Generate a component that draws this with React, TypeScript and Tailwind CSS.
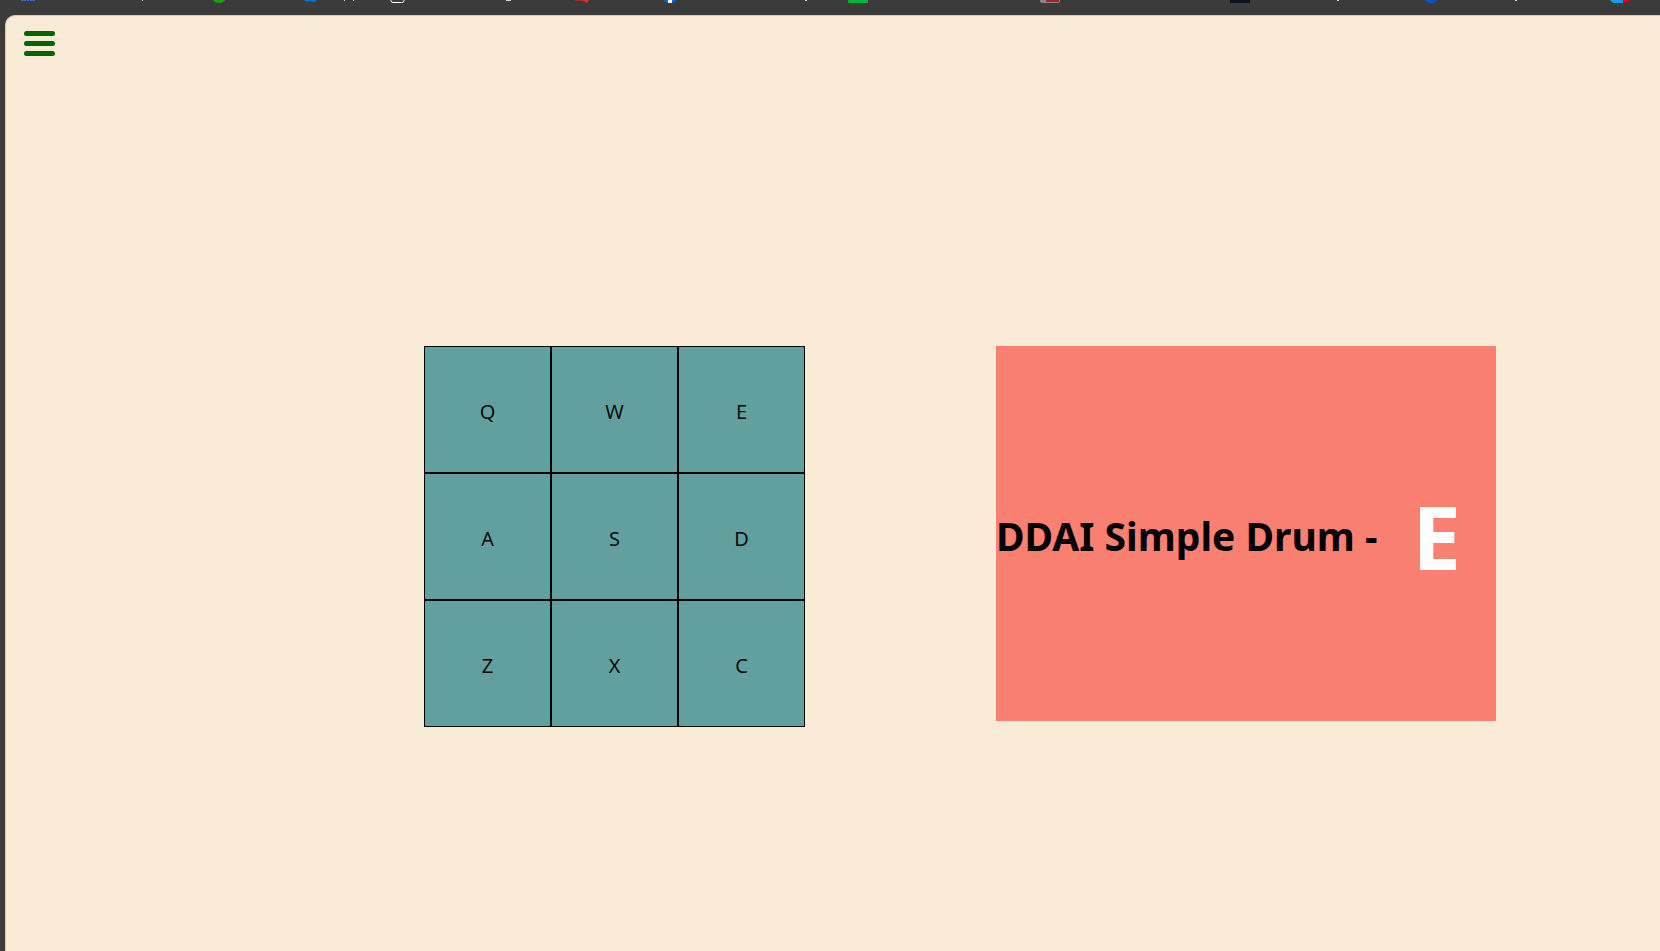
import React, { useState } from "react";

const rows = [
  ["Q", "W", "E"],
  ["A", "S", "D"],
  ["Z", "X", "C"],
];

function Tick({ className }: { className: string }) {
  return <span className={"h-px shrink-0 bg-[#d8d8d8] " + className} />;
}

function BookmarkStrip() {
  return (
    <header aria-hidden="true" className="flex h-[15px] shrink-0 items-start overflow-hidden bg-[#3b3b3b]">
      <svg className="ml-[21px] shrink-0" width="14" height="4">
        <path d="M0 0h5v1h-5zM6 0h2v1h-2zM9 0h5v1h-5z" fill="#3b6fc4" />
      </svg>
      <Tick className="ml-[107px] w-px" />
      <svg className="ml-[69px] shrink-0" width="14" height="4">
        <circle cx="7" cy="-5" r="8" fill="#16a800" />
      </svg>
      <svg className="ml-[78px] shrink-0" width="13" height="4">
        <path d="M0 0H13L11 2L1 1Z" fill="#0a70c8" />
      </svg>
      <Tick className="ml-[27px] w-px" />
      <Tick className="ml-2 w-px" />
      <svg className="ml-[36px] shrink-0" width="16" height="4">
        <rect x="1" y="-10" width="13" height="12.5" rx="2" fill="none" stroke="#fff" />
      </svg>
      <Tick className="ml-[100px] w-[5px]" />
      <svg className="ml-[63px] shrink-0" width="15" height="4">
        <path d="M0 0H8V1H2Z" fill="#a52a2a" />
        <path d="M7 0H15L13 3L10 1Z" fill="#e03030" />
      </svg>
      <svg className="ml-[74px] shrink-0" width="14" height="4">
        <circle cx="7" cy="-5" r="8" fill="#0866e0" />
        <path d="M5 0h4v3h-4z" fill="#fff" />
      </svg>
      <Tick className="ml-[128px] w-[2px]" />
      <svg className="ml-[41px] shrink-0" width="20" height="4">
        <rect y="-17" width="20" height="20" rx="1" fill="#00b53c" />
      </svg>
      <svg className="ml-[172px] shrink-0" width="20" height="4">
        <rect y="-17" width="20" height="20" rx="2" fill="#85858d" />
        <rect x="6" y="-10" width="13" height="12" rx="1" fill="#9c2422" />
      </svg>
      <svg className="ml-[170px] shrink-0" width="20" height="4">
        <rect y="-17" width="20" height="20" fill="#0b1420" />
      </svg>
      <Tick className="ml-[87px] w-[2px]" />
      <svg className="ml-[85px] shrink-0" width="14" height="4">
        <circle cx="7" cy="-5" r="8" fill="#0855da" />
      </svg>
      <Tick className="ml-[77px] w-[2px]" />
      <svg className="ml-[93px] shrink-0" width="20" height="4">
        <path d="M0 0H13V3H3Z" fill="#1c97f0" />
        <path d="M13 0H20V1L14 3Z" fill="#d9001b" />
      </svg>
    </header>
  );
}

export default function App() {
  const [active, setActive] = useState("E");

  return (
    <div className="flex min-h-screen flex-col bg-[#3b3b3b] font-['Noto_Sans',sans-serif] text-black">
      <BookmarkStrip />
      <div className="ml-[5px] flex grow flex-col rounded-tl-[10px] border-t border-l border-[#d9cbb9] bg-[#faebd7]">
        <nav className="flex px-[18px] pt-[15px]">
          <button type="button" aria-label="Menu" className="flex w-[31px] flex-col gap-[5px]">
            <span className="h-[5px] w-full rounded-full bg-[#006400]" />
            <span className="h-[5px] w-full rounded-full bg-[#006400]" />
            <span className="h-[5px] w-full rounded-full bg-[#006400]" />
          </button>
        </nav>
        <main className="grid grow grid-cols-[418fr_auto_191fr_auto_164fr] grid-rows-[290fr_auto_224fr]">
          <div className="col-start-2 row-start-2 grid grid-cols-[repeat(3,127px)] auto-rows-[127px] font-['Open_Sans',sans-serif]">
            {rows.flat().map((key) => (
              <button
                key={key}
                type="button"
                onClick={() => setActive(key)}
                className="flex items-center justify-center border border-black bg-[#62a09f] pt-1 text-[20px] leading-7"
              >
                {key}
              </button>
            ))}
          </div>
          <section className="col-start-4 row-start-2 flex h-[375px] w-[500px] items-center bg-[#fa8072] pt-1">
            <h1 className="text-[39px] leading-[54px] font-bold whitespace-nowrap">DDAI Simple Drum -</h1>
            <output className="grow text-center text-[87px] leading-[116px] font-bold text-white">{active}</output>
          </section>
        </main>
      </div>
    </div>
  );
}
